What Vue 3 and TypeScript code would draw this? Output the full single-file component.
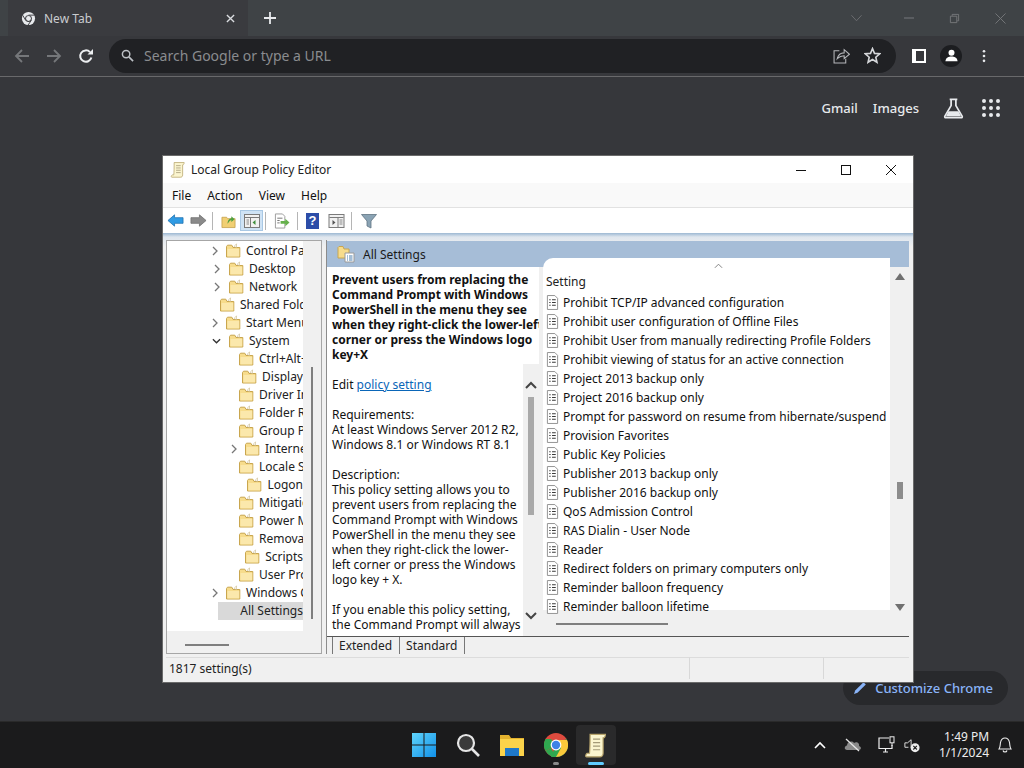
<script setup lang="ts">
type TreeRow = { label: string; depth: number; arrow?: 'right' | 'down'; selected?: boolean; special?: boolean }

const treeRows: TreeRow[] = [
  { label: 'Control Panel', depth: 0, arrow: 'right' },
  { label: 'Desktop', depth: 0, arrow: 'right' },
  { label: 'Network', depth: 0, arrow: 'right' },
  { label: 'Shared Folders', depth: 0 },
  { label: 'Start Menu and Taskbar', depth: 0, arrow: 'right' },
  { label: 'System', depth: 0, arrow: 'down' },
  { label: 'Ctrl+Alt+Del Options', depth: 1 },
  { label: 'Display', depth: 1 },
  { label: 'Driver Installation', depth: 1 },
  { label: 'Folder Redirection', depth: 1 },
  { label: 'Group Policy', depth: 1 },
  { label: 'Internet Communication', depth: 1, arrow: 'right' },
  { label: 'Locale Services', depth: 1 },
  { label: 'Logon', depth: 1 },
  { label: 'Mitigation Options', depth: 1 },
  { label: 'Power Management', depth: 1 },
  { label: 'Removable Storage', depth: 1 },
  { label: 'Scripts', depth: 1 },
  { label: 'User Profiles', depth: 1 },
  { label: 'Windows Components', depth: 0, arrow: 'right' },
  { label: 'All Settings', depth: 0, selected: true, special: true },
]

const titleLines = [
  'Prevent users from replacing the',
  'Command Prompt with Windows',
  'PowerShell in the menu they see',
  'when they right-click the lower-left',
  'corner or press the Windows logo',
  'key+X',
]

const bodyBlocks = [
  ['Requirements:', 'At least Windows Server 2012 R2,', 'Windows 8.1 or Windows RT 8.1'],
  [
    'Description:',
    'This policy setting allows you to',
    'prevent users from replacing the',
    'Command Prompt with Windows',
    'PowerShell in the menu they see',
    'when they right-click the lower-',
    'left corner or press the Windows',
    'logo key + X.',
  ],
  ['If you enable this policy setting,', 'the Command Prompt will always'],
]

const settings = [
  'Prohibit TCP/IP advanced configuration',
  'Prohibit user configuration of Offline Files',
  'Prohibit User from manually redirecting Profile Folders',
  'Prohibit viewing of status for an active connection',
  'Project 2013 backup only',
  'Project 2016 backup only',
  'Prompt for password on resume from hibernate/suspend',
  'Provision Favorites',
  'Public Key Policies',
  'Publisher 2013 backup only',
  'Publisher 2016 backup only',
  'QoS Admission Control',
  'RAS Dialin - User Node',
  'Reader',
  'Redirect folders on primary computers only',
  'Reminder balloon frequency',
  'Reminder balloon lifetime',
]

const menus = ['File', 'Action', 'View', 'Help']
</script>

<template>
  <div class="desktop">
    <svg class="defs" width="0" height="0" aria-hidden="true">
      <defs>
        <symbol id="folder" viewBox="0 0 16 16">
          <path d="M1.5 3.5 V14 H14.8 V4.5 H8 L6.8 2.2 H2.5 Z" fill="#f7dc8c" stroke="#c9a64f" stroke-width="1" />
          <path d="M2.5 6 H14.2 V13.4 H2.5 Z" fill="#fbe8ac" />
          <path d="M9 3.5 L11.5 .8 V4.5 Z" fill="#fff" stroke="#c9b98a" stroke-width=".6" />
        </symbol>
        <symbol id="doc" viewBox="0 0 14 16">
          <path d="M1.5 .5 H9.5 L12.5 3.5 V15.5 H1.5 Z" fill="#fff" stroke="#8c8c8c" />
          <path d="M3.5 5 H5 M6.5 5 H10.5 M3.5 8 H5 M6.5 8 H10.5 M3.5 11 H5 M6.5 11 H10.5" stroke="#3a3a3a" stroke-width="1.2" />
        </symbol>
        <symbol id="settingsfolder" viewBox="0 0 18 18">
          <path d="M1 2.5 V13 H12 V4 H7 L6 1.5 H2 Z" fill="#f7dc8c" stroke="#c9a64f" />
          <path d="M8 8 H17 V17 H8 Z" fill="#fff" stroke="#9a9a9a" />
          <path d="M10 11 H11 M12 11 H15.5 M10 13 H11 M12 13 H15.5 M10 15 H11 M12 15 H15.5" stroke="#4a7fae" />
        </symbol>
        <symbol id="scroll" viewBox="0 0 20 22">
          <path d="M5 2 H18 C18 4 17 5 16 5 V18 C16 20 15 21 13 21 H2 C1 21 1 19 2.5 18 H4.5 C5 14 5 8 5 2 Z" fill="#fbf5cf" stroke="#b8a56c" stroke-width="1" />
          <path d="M7.5 6 H13.5 M7.5 9 H13.5 M7.5 12 H13.5 M7.5 15 H13.5" stroke="#a49a78" stroke-width="1" />
        </symbol>
      </defs>
    </svg>

    <header class="tabstrip">
      <div class="tab">
        <svg class="chrome-mini" viewBox="0 0 16 16">
          <circle cx="8" cy="8" r="7" fill="#e8eaed" />
          <circle cx="8" cy="8" r="3.6" fill="#3c3d41" />
          <circle cx="8" cy="8" r="2.6" fill="#e8eaed" />
          <path d="M8 4.4 H14.6 M5 10 L1.8 4.5 M11 10 L7.5 15" stroke="#3c3d41" stroke-width="1" />
        </svg>
        <span class="tab-title">New Tab</span>
        <svg class="tab-close" viewBox="0 0 10 10"><path d="M1 1 L9 9 M9 1 L1 9" stroke="#dadce0" stroke-width="1.5" /></svg>
      </div>
      <svg class="new-tab" viewBox="0 0 12 12"><path d="M6 0 V12 M0 6 H12" stroke="#e8eaed" stroke-width="1.8" /></svg>
      <div class="win-controls">
        <svg viewBox="0 0 12 8" class="wc wc-chev"><path d="M.5 1 L6 7 L11.5 1" fill="none" stroke="#6e7073" stroke-width="1" /></svg>
        <svg viewBox="0 0 12 12" class="wc wc-min"><path d="M1 6 H11" stroke="#77797c" stroke-width="1" /></svg>
        <svg viewBox="0 0 12 12" class="wc wc-max"><path d="M1.5 3.5 H8.5 V10.5 H1.5 Z M3.5 3 V1.5 H10.5 V8.5 H9" fill="none" stroke="#77797c" stroke-width="1" /></svg>
        <svg viewBox="0 0 12 12" class="wc wc-x"><path d="M.5 .5 L11.5 11.5 M11.5 .5 L.5 11.5" stroke="#77797c" stroke-width="1" /></svg>
      </div>
    </header>

    <nav class="toolbar">
      <svg class="nav-ic first" viewBox="0 0 16 16"><path d="M15 8 H2 M8 2 L2 8 L8 14" fill="none" stroke="#75777a" stroke-width="1.8" /></svg>
      <svg class="nav-ic" viewBox="0 0 16 16"><path d="M1 8 H14 M8 2 L14 8 L8 14" fill="none" stroke="#75777a" stroke-width="1.8" /></svg>
      <svg class="nav-ic" viewBox="0 0 16 16"><path d="M13.4 9.6 A5.7 5.7 0 1 1 12 4.1" fill="none" stroke="#eceef0" stroke-width="2" /><path d="M9.5 6.5 H15 V1 Z" fill="#eceef0" /></svg>
      <div class="omnibox">
        <svg class="search-ic" viewBox="0 0 14 14"><circle cx="5.5" cy="5.5" r="4" fill="none" stroke="#bdc1c6" stroke-width="1.6" /><path d="M8.5 8.5 L13 13" stroke="#bdc1c6" stroke-width="1.8" /></svg>
        <span class="omni-text">Search Google or type a URL</span>
        <svg class="omni-ic share" viewBox="0 0 16 16"><path d="M6 3.5 H1 V15 H12 V11" fill="none" stroke="#b4b6b9" stroke-width="1" /><path d="M4 11 C5 7 8 5.5 10.5 5.5 V2.5 L15.5 6.8 L10.5 11 V8.2 C8 8.2 6 9 4 11 Z" fill="none" stroke="#b4b6b9" stroke-width="1" /></svg>
        <svg class="omni-ic star" viewBox="0 0 16 16"><path d="M8 1.5 L9.9 6 L14.8 6.4 L11.1 9.6 L12.2 14.4 L8 11.8 L3.8 14.4 L4.9 9.6 L1.2 6.4 L6.1 6 Z" fill="none" stroke="#d5d7da" stroke-width="1.5" /></svg>
      </div>
      <div class="side-panel"><span></span></div>
      <div class="avatar">
        <svg viewBox="0 0 16 16"><circle cx="8" cy="5" r="3.2" fill="#fff" /><path d="M1.5 14 C2 10 5 9 8 9 C11 9 14 10 14.500 14 Z" fill="#fff" /></svg>
      </div>
      <svg class="kebab" viewBox="0 0 4 16"><circle cx="2" cy="2.500" r="1.500" fill="#e8eaed" /><circle cx="2" cy="8" r="1.500" fill="#e8eaed" /><circle cx="2" cy="13.500" r="1.500" fill="#e8eaed" /></svg>
    </nav>

    <main class="newtab">
      <div class="ntp-links">
        <span class="ntp-link gmail">Gmail</span>
        <span class="ntp-link images">Images</span>
        <svg class="flask" viewBox="0 0 22 22"><path d="M7 1.500 H15 M8.500 1.500 V8 L2 19 C1.500 20 2 20.700 3 20.700 H19 C20 20.700 20.500 20 20 19 L13.500 8 V1.500" fill="none" stroke="#e8eaed" stroke-width="1.800" /><path d="M5.800 14 H16.200 L19 19.500 H3 Z" fill="#e8eaed" /></svg>
        <div class="apps">
          <i v-for="n in 9" :key="n"></i>
        </div>
      </div>
      <div class="customize">
        <svg viewBox="0 0 14 14"><path d="M1 13 L2.200 9.500 L10.500 1.200 L12.800 3.500 L4.500 11.800 Z" fill="#8ab4f8" /></svg>
        <span>Customize Chrome</span>
      </div>

      <section class="window">
        <div class="titlebar">
          <svg class="title-ic"><use href="#scroll" /></svg>
          <span class="title-text">Local Group Policy Editor</span>
          <svg class="cap cap-min" viewBox="0 0 10 10"><path d="M0 5.500 H10" stroke="#111" stroke-width="1" /></svg>
          <svg class="cap cap-max" viewBox="0 0 10 10"><rect x=".5" y=".5" width="9" height="9" fill="none" stroke="#111" stroke-width="1" /></svg>
          <svg class="cap cap-x" viewBox="0 0 10 10"><path d="M0 0 L10 10 M10 0 L0 10" stroke="#111" stroke-width="1" /></svg>
        </div>
        <div class="menubar">
          <span v-for="m in menus" :key="m" class="menu">{{ m }}</span>
        </div>
        <div class="mmc-toolbar">
          <svg class="tb back" viewBox="0 0 18 14"><path d="M1 7 L8 1 V4 H17 V10 H8 V13 Z" fill="#2f9be4" stroke="#1f6fae" stroke-width=".8" /></svg>
          <svg class="tb fwd" viewBox="0 0 18 14"><path d="M17 7 L10 1 V4 H1 V10 H10 V13 Z" fill="#8a8a8a" stroke="#6d6d6d" stroke-width=".8" /></svg>
          <span class="sep sep1"></span>
          <svg class="tb up" viewBox="0 0 16 16"><path d="M1 4 H6 L7 5.500 H15 V15 H1 Z" fill="#f1cf73" stroke="#c19c45" stroke-width=".8" /><path d="M7 11 C7 7 9 5.500 11 5 V3 L14.500 6 L11 9 V7 C9.500 7.500 8.500 9 7 11 Z" fill="#4fa03f" /></svg>
          <div class="tb-active">
            <svg viewBox="0 0 16 16"><rect x=".5" y="1.500" width="15" height="13" fill="#f1f1f1" stroke="#7b7b7b" /><path d="M1 4.500 H15 M6.500 4.500 V14" stroke="#7b7b7b" /><path d="M11.500 7 V12 L8.500 9.500 Z" fill="#3f8f3d" /><path d="M2.500 7 H5 M2.500 9 H5 M2.500 11 H5" stroke="#8a8a8a" /></svg>
          </div>
          <span class="sep sep2"></span>
          <svg class="tb export" viewBox="0 0 17 16"><path d="M1.500 .5 H9 L11.500 3 V15.500 H1.500 Z" fill="#fff" stroke="#9a9a9a" /><path d="M3.500 5 H9 M3.500 7.500 H6 M3.500 10 H6" stroke="#707070" /><path d="M7 8 H12 V5.500 L16.500 9.500 L12 13.500 V11 H7 Z" fill="#66b14c" /></svg>
          <span class="sep sep3"></span>
          <div class="help">?</div>
          <svg class="tb pane" viewBox="0 0 16 16"><rect x=".5" y="1.500" width="15" height="13" fill="#f1f1f1" stroke="#7b7b7b" /><path d="M1 4.500 H15 M9.500 4.500 V14" stroke="#7b7b7b" /><path d="M4 7 V12 L7 9.500 Z" fill="#555" /><path d="M11 7 H14 M11 9 H14 M11 11 H14" stroke="#8a8a8a" /></svg>
          <span class="sep sep4"></span>
          <svg class="tb filter" viewBox="0 0 16 16"><path d="M.5 1.500 H15.500 L10 8 V15 L6 13 V8 Z" fill="#8aa3b4" stroke="#5f7483" stroke-width=".8" /></svg>
        </div>

        <div class="workspace">
          <aside class="tree">
            <div class="tree-scroll">
              <div
                v-for="row in treeRows"
                :key="row.label"
                class="tree-row"
                :class="{ deep: row.depth === 1 }"
              >
                <span class="twisty">
                  <svg v-if="row.arrow === 'right'" viewBox="0 0 6 10"><path d="M1 1 L5 5 L1 9" fill="none" stroke="#777" stroke-width="1.300" /></svg>
                  <svg v-else-if="row.arrow === 'down'" class="down" viewBox="0 0 10 6"><path d="M1 1 L5 5 L9 1" fill="none" stroke="#333" stroke-width="1.500" /></svg>
                </span>
                <svg class="folder"><use :href="row.special ? '#settingsfolder' : '#folder'" /></svg>
                <span class="tree-label" :class="{ selected: row.selected }">{{ row.label }}</span>
              </div>
            </div>
            <span class="tree-vthumb"></span>
            <span class="tree-hthumb"></span>
          </aside>

          <section class="detail">
            <div class="detail-head">
              <svg class="head-ic"><use href="#settingsfolder" /></svg>
              <span>All Settings</span>
            </div>
            <div class="detail-body">
              <div class="desc">
                <div class="desc-text">
                  <p class="desc-title">
                    <span v-for="line in titleLines" :key="line">{{ line }}</span>
                  </p>
                  <p class="edit">Edit <a>policy setting </a></p>
                  <p v-for="(block, i) in bodyBlocks" :key="i" class="desc-block">
                    <span v-for="line in block" :key="line">{{ line }}</span>
                  </p>
                </div>
                <div class="desc-scroll">
                  <svg viewBox="0 0 12 8"><path d="M1 7 L6 2 L11 7" fill="none" stroke="#444" stroke-width="2" /></svg>
                  <span class="desc-thumb"></span>
                  <svg viewBox="0 0 12 8"><path d="M1 1 L6 6 L11 1" fill="none" stroke="#444" stroke-width="2" /></svg>
                </div>
              </div>
              <div class="list-pane">
                <div class="list">
                  <svg class="sort" viewBox="0 0 10 6"><path d="M1 5 L5 1 L9 5" fill="none" stroke="#777" stroke-width="1" /></svg>
                  <div class="list-head">Setting</div>
                  <div v-for="s in settings" :key="s" class="list-row">
                    <svg class="doc"><use href="#doc" /></svg>
                    <span>{{ s }}</span>
                  </div>
                  <span class="list-hthumb"></span>
                </div>
                <div class="list-scroll">
                  <i class="tri up-tri"></i>
                  <span class="list-thumb"></span>
                  <i class="tri down-tri"></i>
                </div>
              </div>
            </div>
            <div class="tabs">
              <span class="mmc-tab ext">Extended</span>
              <span class="mmc-tab std">Standard</span>
            </div>
          </section>
        </div>

        <footer class="status">
          <span class="status-main">1817 setting(s)</span>
          <span class="status-cell mid"></span>
          <span class="status-cell end"></span>
        </footer>
      </section>
    </main>

    <footer class="taskbar">
      <div class="task-center">
        <svg class="task-ic" viewBox="0 0 24 24">
          <defs><linearGradient id="win" x1="0" y1="0" x2="1" y2="1"><stop offset="0" stop-color="#5fd4fb" /><stop offset="1" stop-color="#1190e8" /></linearGradient></defs>
          <path d="M0 0 H11.500 V11.500 H0 Z M12.500 0 H24 V11.500 H12.500 Z M0 12.500 H11.500 V24 H0 Z M12.500 12.500 H24 V24 H12.500 Z" fill="url(#win)" />
        </svg>
        <svg class="task-ic" viewBox="0 0 24 24"><circle cx="10" cy="10" r="8" fill="#3a3a3a" stroke="#e6e6e6" stroke-width="2.200" /><path d="M16 16 L23 23" stroke="#e6e6e6" stroke-width="2.600" /></svg>
        <svg class="task-ic" viewBox="0 0 24 24"><path d="M0 2 H9 L11 5 H24 V23 H0 Z" fill="#e3b22e" /><path d="M0 6 H24 V23 H0 Z" fill="#fbd34a" /><path d="M5 15 H19 V23 H5 Z" fill="#1f79c9" /></svg>
        <div class="chrome-wrap">
          <svg class="task-ic" viewBox="0 0 24 24">
            <circle cx="12" cy="12" r="12" fill="#dd4b3e" />
            <path d="M12 12 L1.600 18 A12 12 0 0 1 1.600 6 L7 6 Z" fill="#2fa84f" />
            <path d="M12 12 L22.400 6 A12 12 0 0 1 12 24 L7 24 Z M12 24 A12 12 0 0 1 1.600 18 L7 15 Z" fill="#2fa84f" />
            <path d="M12 7 H23 A12 12 0 0 1 12 24 L17 15 Z" fill="#fbc93b" />
            <circle cx="12" cy="12" r="5.400" fill="#fff" />
            <circle cx="12" cy="12" r="4.200" fill="#3f83e6" />
          </svg>
          <i class="run-dot"></i>
        </div>
        <div class="active-app">
          <svg><use href="#scroll" /></svg>
          <i></i>
        </div>
      </div>
      <div class="tray">
        <svg class="tray-chev" viewBox="0 0 12 8"><path d="M1 7 L6 2 L11 7" fill="none" stroke="#fff" stroke-width="1.600" /></svg>
        <svg class="tray-cloud" viewBox="0 0 18 14"><path d="M3 12 C0 12 0 8 3 7.500 C3 4 8 2 10 5 C13 3 16 6 15 8 C18 9 17 12 15 12 Z" fill="#8a8a8a" /><path d="M2 1 L15 13" stroke="#e6e6e6" stroke-width="1.300" /></svg>
        <svg class="tray-net" viewBox="0 0 18 18"><path d="M11 2 H1 V12.500 H14 V9 M5 16 H10 M7.500 13 V16" fill="none" stroke="#eee" stroke-width="1.200" /><rect x="12" y=".8" width="4" height="6" fill="none" stroke="#eee" /><path d="M14 7 V10" stroke="#eee" /></svg>
        <svg class="tray-vol" viewBox="0 0 18 16"><path d="M1 5 H4 L8 1.500 V11" fill="none" stroke="#eee" stroke-width="1" /><path d="M1 5 V10 H5" fill="none" stroke="#eee" stroke-width="1" /><circle cx="12.500" cy="10.500" r="5" fill="#eee" /><path d="M10.500 8.500 L14.500 12.500 M14.500 8.500 L10.500 12.500" stroke="#1a1a1a" stroke-width="1.200" /></svg>
        <div class="clock"><span>1:49 PM</span><span>1/1/2024</span></div>
        <svg class="tray-bell" viewBox="0 0 14 16"><path d="M1 12 C2.500 10 2 8 2.500 5.500 C3 3 5 1 7 1 C9 1 11 3 11.500 5.500 C12 8 11.500 10 13 12 Z M5 13.500 C5.500 15.500 8.500 15.500 9 13.500" fill="none" stroke="#eee" stroke-width="1.100" /></svg>
      </div>
    </footer>
  </div>
</template>

<style>
html, body { margin: 0; background: #35363a; }
</style>

<style scoped>
.defs { position: absolute; }
.desktop {
  width: 1024px;
  height: 768px;
  display: flex;
  flex-direction: column;
  overflow: hidden;
  background: #36373b;
  font-family: "Noto Sans", "Open Sans", sans-serif;
}

/* chrome */
.tabstrip {
  height: 36px;
  flex: none;
  display: flex;
  align-items: center;
  background: #3f4346;
}
.tab {
  width: 240px;
  margin-left: 8px;
  height: 36px;
  padding: 0 11px 0 13px;
  box-sizing: border-box;
  display: flex;
  align-items: center;
  background: #3a3b3f;
}
.chrome-mini { width: 15px; height: 15px; margin-right: 8px; }
.tab-title { font-size: 12px; color: #c9cccf; flex: 1; }
.tab-close { width: 9px; height: 9px; margin-right: 2px; }
.new-tab { width: 12px; height: 12px; margin-left: 16px; }
.win-controls { margin-left: auto; position: relative; display: flex; align-items: center; }
.wc { display: block; }
.wc-chev { width: 11px; height: 8px; margin-right: 41px; }
.wc-min { width: 12px; height: 12px; margin-right: 34px; }
.wc-max { width: 11px; height: 11px; margin-right: 35px; }
.wc-x { width: 11px; height: 11px; margin-right: 18px; }

.toolbar {
  height: 40px;
  flex: none;
  display: flex;
  align-items: center;
  background: #37383c;
  border-bottom: 1px solid #69696b;
  padding-bottom: 1px;
  box-sizing: border-box;
  height: 41px;
}
.nav-ic { width: 16px; height: 16px; margin-right: 16px; }
.nav-ic.first { margin-left: 14px; }
.omnibox {
  margin-left: -1px;
  width: 787px;
  height: 34px;
  border-radius: 17px;
  background: #202124;
  display: flex;
  align-items: center;
  padding: 0 12px;
  box-sizing: border-box;
}
.search-ic { width: 13px; height: 13px; margin-right: 10px; }
.omni-text { font-size: 14px; color: #8a8c8f; flex: 1; }
.omni-ic { width: 17px; height: 17px; }
.share { margin-right: 14px; }
.star { margin-right: 3px; }
.side-panel {
  width: 14px;
  height: 14px;
  margin-left: 16px;
  border: 0;
  background: #fff;
  display: flex;
  justify-content: flex-end;
  box-sizing: border-box;
}
.side-panel span { display: block; width: 8px; height: 10px; margin: 2px 2px 2px 0; background: #37383c; }
.avatar {
  width: 22px;
  height: 22px;
  margin-left: 14px;
  border-radius: 50%;
  background: #1c1d20;
  display: flex;
  align-items: center;
  justify-content: center;
}
.avatar svg { width: 15px; height: 15px; }
.kebab { width: 4px; height: 14px; margin-left: 20px; }

.newtab { position: relative; flex: 1; min-height: 0; }
.ntp-links {
  display: flex;
  align-items: center;
  justify-content: flex-end;
  height: 62px;
  padding-right: 24px;
}
.ntp-link { font-size: 13px; color: #e8eaed; font-weight: 500; }
.images { margin-left: 15px; }
.flask { width: 21px; height: 21px; margin-left: 24px; }
.apps {
  margin-left: 18px;
  width: 18px;
  height: 18px;
  display: grid;
  grid-template-columns: repeat(3, 4px);
  grid-auto-rows: 4px;
  gap: 3px;
}
.apps i { background: #e8eaed; border-radius: 50%; }
.customize {
  position: absolute;
  right: 16px;
  bottom: 16px;
  width: 165px;
  height: 34px;
  border-radius: 17px;
  background: #28292c;
  box-sizing: border-box;
  display: flex;
  align-items: center;
  justify-content: flex-end;
  padding-right: 15px;
  gap: 8px;
  color: #8ab4f8;
  font-size: 13px;
  font-weight: 500;
}
.customize svg { width: 14px; height: 14px; }

/* window */
.window {
  position: absolute;
  left: 162px;
  top: 78px;
  width: 752px;
  height: 528px;
  box-sizing: border-box;
  border: 1px solid #6a6a6a;
  display: flex;
  flex-direction: column;
  background: #f0f0f0;
  color: #111;
}
.titlebar {
  height: 27px;
  flex: none;
  display: flex;
  align-items: center;
  background: #fff;
  font-size: 12px;
}
.title-ic { width: 16px; height: 17px; margin-left: 7px; }
.title-text { margin-left: 5px; flex: 1; color: #222; }
.cap { width: 10px; height: 10px; }
.cap-min { margin-right: 35px; }
.cap-max { margin-right: 35px; }
.cap-x { margin-right: 17px; }
.menubar {
  height: 25px;
  flex: none;
  display: flex;
  align-items: center;
  background: #f9f9f9;
  border-bottom: 1px solid #e2e2e2;
  box-sizing: border-box;
  padding-left: 9px;
  gap: 16px;
  font-size: 12px;
}
.mmc-toolbar {
  height: 25px;
  flex: none;
  display: flex;
  align-items: center;
  background: #fff;
  padding-left: 4px;
}
.tb { width: 17px; height: 15px; display: block; }
.back { margin-right: 6px; }
.fwd { margin-right: 5px; }
.sep { width: 1px; height: 18px; background: #b5b5b5; }
.up { width: 15px; height: 16px; margin-left: 8px; margin-right: 4px; }
.tb-active {
  width: 23px;
  height: 21px;
  background: #cfe3f5;
  border: 1px solid #a9c8e4;
  box-sizing: border-box;
  display: flex;
  align-items: center;
  justify-content: center;
  margin-right: 2px;
}
.tb-active svg { width: 16px; height: 16px; }
.export { margin-left: 8px; width: 16px; height: 16px; margin-right: 7px; }
.help {
  margin-left: 8px;
  width: 13px;
  height: 16px;
  background: #2c4da8;
  color: #fff;
  font: 700 13px/16px "Liberation Sans", sans-serif;
  text-align: center;
  margin-right: 9px;
}
.pane { width: 17px; height: 16px; margin-right: 6px; }
.filter { margin-left: 9px; width: 16px; height: 16px; }

.workspace {
  flex: 1;
  min-height: 0;
  display: flex;
  gap: 4px;
  padding: 7px 4px 3px 3px;
  background: linear-gradient(#9db8d3, #dfe6ee 4px, #f0f0f0 14px);
}
.tree {
  position: relative;
  width: 156px;
  flex: none;
  height: 414px;
  background: #f0f0f0;
  box-sizing: border-box;
  border: 1px solid #a6a6a6;
  overflow: hidden;
}
.tree-scroll {
  position: absolute;
  left: 0;
  top: 0;
  width: 136px;
  height: 389px;
  background: #fff;
  padding-top: 1px;
  overflow: hidden;
}
.tree-row {
  height: 18px;
  display: flex;
  align-items: center;
  font-size: 12px;
  padding-left: 45px;
  white-space: nowrap;
}
.tree-row.deep { padding-left: 64px; }
.twisty { width: 9px; margin-right: 7px; display: flex; justify-content: center; }
.twisty svg { width: 6px; height: 10px; }
.twisty svg.down { width: 10px; height: 6px; }
.folder { width: 16px; height: 16px; flex: none; margin-right: 5px; }
.tree-label { color: #222; padding: 0 30px 0 0; margin-right: -30px; line-height: 18px; }
.tree-label.selected { background: #d9d9d9; margin-left: -22px; padding-left: 22px; }
.tree-vthumb {
  position: absolute;
  left: 144px;
  top: 126px;
  width: 2px;
  height: 252px;
  background: #7f7f7f;
}
.tree-hthumb {
  position: absolute;
  left: 18px;
  top: 403px;
  width: 44px;
  height: 2px;
  background: #7f7f7f;
}

.detail {
  flex: 1;
  min-width: 0;
  display: flex;
  flex-direction: column;
  height: 414px;
  border-left: 1px solid #8c8c8c;
  box-sizing: border-box;
  position: relative;
  margin-right: 0;
}
.detail-head {
  height: 26px;
  flex: none;
  display: flex;
  align-items: center;
  background: #a6bdd7;
  font-size: 12px;
  padding-left: 10px;
  color: #1a1a1a;
  margin-top: 1px;
}
.head-ic { width: 18px; height: 18px; margin-right: 8px; }
.detail-body {
  flex: 1;
  min-height: 0;
  display: flex;
  background: #fff;
  position: relative;
}
.desc {
  width: 212px;
  flex: none;
  position: relative;
  overflow: hidden;
  font-size: 12px;
  line-height: 15px;
  color: #111;
}
.desc-text { padding: 5px 0 0 5px; }
.desc p { margin: 0 0 15px; }
.desc p span { display: block; white-space: nowrap; }
.desc-title { font-weight: 700; }
.edit a { color: #0a66b8; text-decoration: underline; }
.desc-scroll {
  position: absolute;
  right: 0;
  top: 97px;
  bottom: 0;
  width: 16px;
  background: #f0f0f0;
  display: flex;
  flex-direction: column;
  align-items: center;
}
.desc-scroll svg { width: 12px; height: 8px; flex: none; margin: 17px 0 8px; }
.desc-scroll svg:last-child { margin: auto 0 16px; }
.desc-thumb { width: 6px; height: 118px; background: #a9a9a9; flex: none; }

.list-pane { flex: 1; min-width: 0; display: flex; position: relative; background: #f0f0f0; }
.list {
  position: relative;
  flex: 1;
  min-width: 0;
  background: #fff;
  margin-left: 4px;
  height: 352px;
  border-top-left-radius: 10px;
  margin-top: -9px;
  padding: 12px 0 0 3px;
  box-sizing: border-box;
  overflow: visible;
}
.sort { position: absolute; left: 171px; top: 5px; width: 9px; height: 6px; }
.list-head { height: 23px; font-size: 12px; line-height: 23px; color: #222; }
.list-row {
  height: 19px;
  display: flex;
  align-items: center;
  font-size: 12px;
  color: #111;
  white-space: nowrap;
}
.doc { width: 13px; height: 15px; margin-right: 4px; }
.list-hthumb {
  position: absolute;
  left: 13px;
  top: 365px;
  width: 112px;
  height: 2px;
  background: #7f7f7f;
}
.list-scroll {
  width: 19px;
  flex: none;
  display: flex;
  flex-direction: column;
  align-items: center;
  padding: 6px 0 0;
  height: 345px;
  box-sizing: border-box;
  position: relative;
}
.tri { width: 0; height: 0; border-left: 5px solid transparent; border-right: 5px solid transparent; display: block; }
.up-tri { border-bottom: 7px solid #707070; }
.down-tri { border-top: 7px solid #707070; position: absolute; top: 337px; }
.list-thumb { position: absolute; top: 215px; width: 6px; height: 17px; background: #8c8c8c; }

.tabs {
  height: 17px;
  flex: none;
  display: flex;
  font-size: 12px;
  line-height: 17px;
  background: #f0f0f0;
  border-top: 1px solid #555;
  box-sizing: border-box;
  height: 18px;
  padding-left: 5px;
  color: #222;
}
.mmc-tab { padding: 0 7px 0 6px; border-left: 1px solid #777; border-right: 1px solid #777; }
.ext { transform: skewX(0deg); }
.std { margin-left: -1px; }

.status {
  height: 25px;
  flex: none;
  display: flex;
  align-items: stretch;
  font-size: 12px;
  background: #f0f0f0;
  box-sizing: border-box;
  padding: 0 4px 3px 3px;
  color: #222;
}
.status-main { flex: 1; display: flex; align-items: center; padding-left: 3px; border-top: 1px solid #dcdcdc; }
.status-cell { border-top: 1px solid #dcdcdc; border-left: 1px solid #d8d8d8; }
.mid { width: 133px; }
.end { width: 85px; }

/* taskbar */
.taskbar {
  height: 47px;
  flex: none;
  background: #1b1b1c;
  border-top: 1px solid #2a2a2a;
  box-sizing: border-box;
  position: relative;
  display: flex;
  align-items: center;
}
.task-center {
  position: absolute;
  left: 412px;
  top: 0;
  height: 46px;
  display: flex;
  align-items: center;
  gap: 20px;
}
.task-ic { width: 24px; height: 24px; display: block; }
.chrome-wrap { position: relative; }
.run-dot {
  position: absolute;
  left: 9px;
  bottom: -8px;
  width: 6px;
  height: 3px;
  border-radius: 2px;
  background: #8a8a8a;
}
.active-app {
  position: relative;
  width: 40px;
  height: 40px;
  margin-left: -12px;
  background: #2a2a2b;
  border-radius: 4px;
  display: flex;
  align-items: center;
  justify-content: center;
}
.active-app svg { width: 24px; height: 26px; }
.active-app i {
  position: absolute;
  bottom: 0;
  left: 12px;
  width: 16px;
  height: 3px;
  border-radius: 2px;
  background: #60cdff;
}
.tray {
  position: absolute;
  left: 814px;
  top: 0;
  height: 46px;
  display: flex;
  align-items: center;
  color: #eee;
}
.tray-chev { width: 12px; height: 8px; margin-right: 18px; }
.tray-cloud { width: 18px; height: 14px; margin-right: 16px; }
.tray-net { width: 18px; height: 18px; margin-right: 8px; }
.tray-vol { width: 16px; height: 15px; margin-right: 19px; }
.clock {
  display: flex;
  flex-direction: column;
  align-items: flex-end;
  font-size: 12px;
  line-height: 16px;
  margin-right: 9px;
}
.tray-bell { width: 14px; height: 16px; }
</style>
